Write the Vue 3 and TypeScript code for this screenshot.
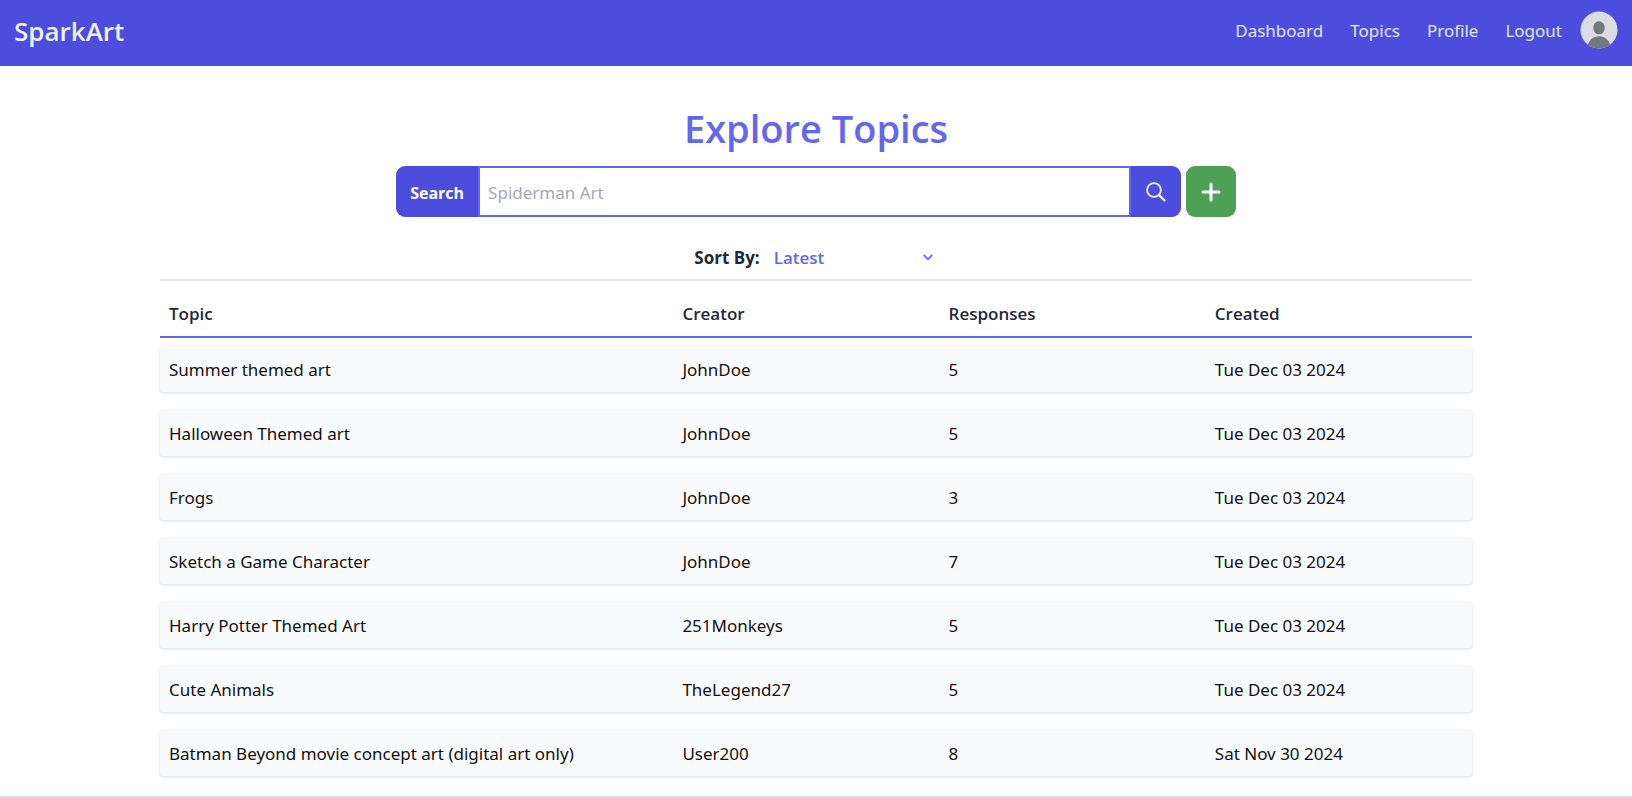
<script setup lang="ts">
import { ref } from 'vue'

interface Topic {
  title: string
  creator: string
  responses: number
  created: string
}

const links: string[] = ['Dashboard', 'Topics', 'Profile', 'Logout']
const query = ref('')
const sortBy = ref('Latest')

const topics: Topic[] = [
  { title: 'Summer themed art', creator: 'JohnDoe', responses: 5, created: 'Tue Dec 03 2024' },
  { title: 'Halloween Themed art', creator: 'JohnDoe', responses: 5, created: 'Tue Dec 03 2024' },
  { title: 'Frogs', creator: 'JohnDoe', responses: 3, created: 'Tue Dec 03 2024' },
  { title: 'Sketch a Game Character', creator: 'JohnDoe', responses: 7, created: 'Tue Dec 03 2024' },
  { title: 'Harry Potter Themed Art', creator: '251Monkeys', responses: 5, created: 'Tue Dec 03 2024' },
  { title: 'Cute Animals', creator: 'TheLegend27', responses: 5, created: 'Tue Dec 03 2024' },
  { title: 'Batman Beyond movie concept art (digital art only)', creator: 'User200', responses: 8, created: 'Sat Nov 30 2024' },
]
</script>

<template>
  <div class="page">
    <header class="navbar">
      <a class="brand" href="#">SparkArt</a>
      <nav class="nav">
        <a v-for="link in links" :key="link" class="nav-link" href="#">{{ link }}</a>
        <svg class="avatar" viewBox="0 0 38 38" role="img" aria-label="Account">
          <clipPath id="avatar-clip"><circle cx="19" cy="19" r="18.5" /></clipPath>
          <g clip-path="url(#avatar-clip)">
            <rect width="38" height="38" fill="#d9dde3" />
            <ellipse cx="19" cy="16.8" rx="5.8" ry="6.5" fill="#71787f" />
            <ellipse cx="19" cy="37" rx="11.6" ry="11.8" fill="#71787f" />
          </g>
        </svg>
      </nav>
    </header>

    <main class="content">
      <h1 class="title">Explore Topics</h1>

      <form class="search-row" @submit.prevent>
        <label class="search-label" for="search">Search</label>
        <input id="search" v-model="query" class="search-input" type="text" placeholder="Spiderman Art" />
        <button class="search-button" type="submit" aria-label="Search topics">
          <svg width="22" height="22" viewBox="0 0 22 22" fill="none" stroke="#eef2ff" stroke-width="1.8">
            <circle cx="9" cy="9" r="6.9" />
            <path d="M13.9 13.9 20 20" stroke-width="2.3" />
          </svg>
        </button>
        <button class="add-button" type="button" aria-label="Add topic">
          <svg width="20" height="20" viewBox="0 0 20 20" fill="none" stroke="#fff" stroke-width="3" stroke-linecap="round">
            <path d="M10 2v16M2 10h16" />
          </svg>
        </button>
      </form>

      <div class="sort-row">
        <label class="sort-label" for="sort">Sort By:</label>
        <div class="sort-control">
          <select id="sort" v-model="sortBy" class="sort-select">
            <option>Latest</option>
            <option>Oldest</option>
          </select>
          <svg class="chevron" width="10" height="7" viewBox="0 0 10 7" fill="none" stroke="#6366f1" stroke-width="1.8">
            <path d="M.7.8 5 5.3 9.3.8" />
          </svg>
        </div>
      </div>

      <table class="topics">
        <thead>
          <tr class="row head-row">
            <th scope="col">Topic</th>
            <th scope="col">Creator</th>
            <th scope="col">Responses</th>
            <th scope="col">Created</th>
          </tr>
        </thead>
        <tbody>
          <tr v-for="topic in topics" :key="topic.title" class="row topic-row">
            <td>{{ topic.title }}</td>
            <td>{{ topic.creator }}</td>
            <td>{{ topic.responses }}</td>
            <td>{{ topic.created }}</td>
          </tr>
        </tbody>
      </table>
    </main>
  </div>
</template>

<style>
body {
  margin: 0;
  background: #fff;
}
</style>

<style scoped>
.page {
  box-sizing: border-box;
  min-height: 100vh;
  border-bottom: 2px solid #d3deee;
  font-family: "Open Sans", "Noto Sans", sans-serif;
  font-size: 17px;
  line-height: 26px;
  color: #111;
}

.navbar {
  box-sizing: border-box;
  display: flex;
  align-items: center;
  justify-content: space-between;
  height: 66px;
  padding: 0 14px 4px;
  background: #4d4ddd;
}

.brand {
  font-size: 26px;
  font-weight: 600;
  color: #eef2ff;
  text-decoration: none;
}

.nav {
  display: flex;
  align-items: center;
  gap: 27px;
}

.nav-link {
  font-family: "Noto Sans", "Open Sans", sans-serif;
  color: #e0e7ff;
  text-decoration: none;
}

.avatar {
  width: 38px;
  height: 38px;
  margin: 0 0 2px -9px;
}

.content {
  padding: 37px 160px 16px;
}

.title {
  margin: 0;
  font-size: 38px;
  font-weight: 600;
  line-height: 50px;
  text-align: center;
  color: #6366f1;
}

.search-row {
  display: flex;
  width: 64%;
  min-width: 400px;
  height: 51px;
  margin: 13px auto 0;
}

.search-label {
  display: flex;
  align-items: center;
  padding: 2px 14px 0;
  border-radius: 9px 0 0 9px;
  background: #4d4ddd;
  font-size: 16px;
  font-weight: 700;
  color: #fff;
}

.search-input {
  flex: 1;
  min-width: 0;
  padding: 2px 8px 0;
  border: 2px solid #6366f1;
  border-radius: 0;
  background: #fff;
  font: inherit;
  font-family: "Noto Sans", "Open Sans", sans-serif;
  color: #111;
  outline: none;
}

.search-input::placeholder {
  color: #a3a8b3;
  opacity: 1;
}

.search-button,
.add-button {
  display: flex;
  align-items: center;
  justify-content: center;
  width: 50px;
  padding: 0;
  border: 0;
  cursor: pointer;
}

.search-button {
  border-radius: 0 9px 9px 0;
  background: #4d4ddd;
}

.add-button {
  margin-left: 5px;
  border-radius: 9px;
  background: #4ca154;
}

.sort-row {
  display: flex;
  align-items: center;
  justify-content: center;
  gap: 14px;
  padding: 28px 0 8px;
  border-bottom: 2px solid #e5e7eb;
}

.sort-label {
  font-weight: 700;
  color: #1f2937;
}

.sort-control {
  display: grid;
  align-items: center;
  width: 164px;
}

.sort-select {
  grid-area: 1 / 1;
  width: 100%;
  padding: 0;
  border: 0;
  appearance: none;
  background: transparent;
  font: inherit;
  font-weight: 600;
  color: #6366f1;
}

.chevron {
  grid-area: 1 / 1;
  justify-self: end;
  margin: 0 5px 2px 0;
  pointer-events: none;
}

.topics,
.topics thead {
  display: block;
}

.topics tbody {
  display: flex;
  flex-direction: column;
  gap: 18px;
  padding-top: 8px;
}

.row {
  display: grid;
  grid-template-columns: 513fr 266fr 266fr 266fr;
}

.row th,
.row td {
  padding: 11px 9px 9px;
  text-align: left;
}

.row td {
  font-family: "Noto Sans", "Open Sans", sans-serif;
}

.head-row {
  padding-top: 9px;
  border-bottom: 2px solid #6366f1;
}

.row th {
  font-weight: 600;
  color: #1f2937;
}

.topic-row {
  border-radius: 2px;
  background: #f9fafb;
  box-shadow: 0 1px 3px rgb(0 0 0 / 15%);
}
</style>
